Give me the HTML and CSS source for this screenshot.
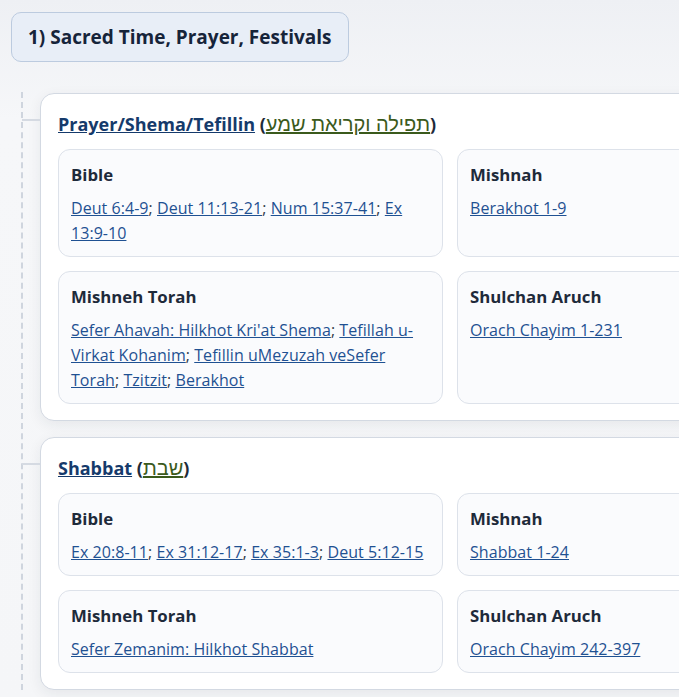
FILE: index.html
```html
<!DOCTYPE html>
<html>
<head>
<meta charset="utf-8">
<link rel="stylesheet" href="styles.css">
</head>
<body>
<div class="page">
  <h2 class="section-pill">1) Sacred Time, Prayer, Festivals</h2>
  <div class="timeline">
    <div class="topic">
      <h3 class="topic-title"><a href="#" class="en">Prayer/Shema/Tefillin</a> (<a href="#" class="he" dir="rtl">תפילה וקריאת שמע</a>)</h3>
      <div class="grid">
        <div class="src">
          <div class="src-label">Bible</div>
          <div class="src-links"><a href="#">Deut 6:4-9</a>; <a href="#">Deut 11:13-21</a>; <a href="#">Num 15:37-41</a>; <a href="#">Ex 13:9-10</a></div>
        </div>
        <div class="src">
          <div class="src-label">Mishnah</div>
          <div class="src-links"><a href="#">Berakhot 1-9</a></div>
        </div>
        <div class="src">
          <div class="src-label">Mishneh Torah</div>
          <div class="src-links"><a href="#">Sefer Ahavah: Hilkhot Kri'at Shema</a>; <a href="#">Tefillah u-Virkat Kohanim</a>; <a href="#">Tefillin uMezuzah veSefer Torah</a>; <a href="#">Tzitzit</a>; <a href="#">Berakhot</a></div>
        </div>
        <div class="src">
          <div class="src-label">Shulchan Aruch</div>
          <div class="src-links"><a href="#">Orach Chayim 1-231</a></div>
        </div>
      </div>
    </div>
    <div class="topic">
      <h3 class="topic-title"><a href="#" class="en">Shabbat</a> (<a href="#" class="he" dir="rtl">שבת</a>)</h3>
      <div class="grid">
        <div class="src">
          <div class="src-label">Bible</div>
          <div class="src-links"><a href="#">Ex 20:8-11</a>; <a href="#">Ex 31:12-17</a>; <a href="#">Ex 35:1-3</a>; <a href="#">Deut 5:12-15</a></div>
        </div>
        <div class="src">
          <div class="src-label">Mishnah</div>
          <div class="src-links"><a href="#">Shabbat 1-24</a></div>
        </div>
        <div class="src">
          <div class="src-label">Mishneh Torah</div>
          <div class="src-links"><a href="#">Sefer Zemanim: Hilkhot Shabbat</a></div>
        </div>
        <div class="src">
          <div class="src-label">Shulchan Aruch</div>
          <div class="src-links"><a href="#">Orach Chayim 242-397</a></div>
        </div>
      </div>
    </div>
  </div>
</div>
</body>
</html>
```

FILE: styles.css
```css
html, body {
  margin: 0;
  padding: 0;
  overflow: hidden;
}
body {
  background: linear-gradient(180deg, #eef0f4 0%, #f6f7f9 120px, #f5f6f8 100%);
  font-family: "Open Sans", "Noto Sans", sans-serif;
  color: #1e2a3a;
  min-height: 697px;
}
.page {
  padding: 12px 0 0 11px;
}
.section-pill {
  display: inline-block;
  margin: 0;
  padding: 12px 16px 12px 16px;
  background: #e8eef7;
  border: 1px solid #bccbdf;
  border-radius: 10px;
  font-size: 19px;
  line-height: 24px;
  font-weight: 700;
  color: #16243a;
}
.timeline {
  margin-top: 30px;
  margin-left: 10px;
  border-left: 2px dashed #cfd5de;
  padding-left: 17px;
  padding-top: 1px;
  width: 820px;
}
.topic {
  position: relative;
  background: #ffffff;
  border: 1px solid #d3d9e2;
  border-radius: 14px;
  padding: 18px 17px 16px 17px;
  margin-bottom: 16px;
  box-shadow: 0 4px 14px rgba(30, 40, 60, 0.07);
}
.topic::before {
  content: "";
  position: absolute;
  left: -19px;
  top: 25px;
  width: 18px;
  height: 2px;
  background: #d5dae2;
}
.topic-title {
  margin: 0 0 13px 0;
  font-size: 18px;
  line-height: 24px;
  font-weight: 700;
  color: #1e2a3a;
}
.topic-title a.en {
  color: #153a6b;
  text-decoration: underline;
}
.topic-title a.he {
  font-family: "Liberation Sans", "DejaVu Sans", sans-serif;
  font-size: 20px;
  line-height: 20px;
  color: #3b5a1c;
  font-weight: 400;
  text-decoration: underline;
}
.grid {
  display: grid;
  grid-template-columns: 385px 385px;
  column-gap: 14px;
  row-gap: 14px;
}
.src {
  background: #fafbfd;
  border: 1px solid #dde2ea;
  border-radius: 12px;
  padding: 13px 12px 10px 12px;
}
.src-label {
  font-size: 16.8px;
  line-height: 24px;
  font-weight: 700;
  color: #1e2a3a;
  margin-bottom: 9px;
}
.src-links {
  font-size: 16px;
  letter-spacing: 0.05px;
  line-height: 25px;
  color: #333d4a;
}
.src-links a {
  color: #1f5192;
  text-decoration: underline;
}
```
